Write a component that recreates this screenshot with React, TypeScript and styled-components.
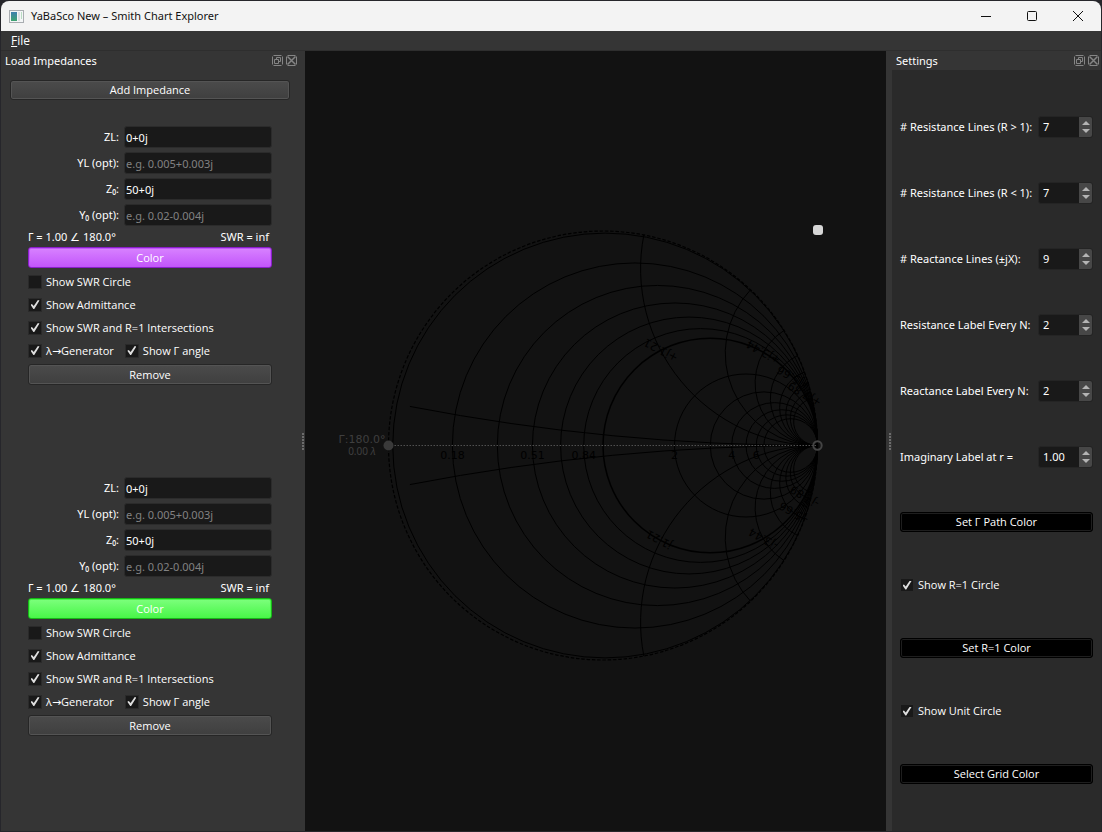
import React, { useState } from 'react';
import styled, { createGlobalStyle } from 'styled-components';

const GlobalStyle = createGlobalStyle`
  * { box-sizing: border-box; }
  body {
    margin: 0;
    background: #26262b;
    font-family: 'Noto Sans', 'Open Sans', sans-serif;
    font-size: 11px;
    line-height: 16px;
    color: #ffffff;
  }
  button, input { font: inherit; color: inherit; }
`;

const controlFont = "'Open Sans', 'DejaVu Sans', sans-serif";

const Window = styled.div`
  display: flex;
  flex-direction: column;
  min-height: 100vh;
  padding: 1px;
`;

const TitleBar = styled.header`
  display: flex;
  align-items: center;
  height: 30px;
  padding-left: 8px;
  gap: 7px;
  background: #f3f3f3;
  color: #111111;
  border-radius: 8px 8px 0 0;
`;

const WindowTitle = styled.h1`
  flex: 1;
  margin: 0;
  font-size: 11px;
  font-weight: 400;
`;

const CaptionButton = styled.button`
  display: flex;
  align-items: center;
  justify-content: center;
  width: 46px;
  height: 30px;
  padding: 0;
  border: 0;
  background: none;
`;

const CaptionGroup = styled.div`
  display: flex;
`;

const MenuBar = styled.nav`
  display: flex;
  align-items: center;
  height: 20px;
  padding-left: 4px;
  background: #353535;
  border-bottom: 1px solid #2e2e2e;
`;

const MenuItem = styled.button`
  padding: 0 6px;
  border: 0;
  background: none;
  font-family: ${controlFont};
  font-size: 12px;
`;

const Workspace = styled.main`
  display: flex;
  flex: 1;
  background: #353535;
`;

const Dock = styled.section<{ $width: number }>`
  display: flex;
  flex-direction: column;
  flex: none;
  width: ${(p) => p.$width}px;
`;

const DockHeader = styled.div`
  display: flex;
  align-items: center;
  height: 19px;
  padding: 0 2px 0 4px;
  gap: 3px;
`;

const DockTitle = styled.h2`
  flex: 1;
  margin: 0;
  font-size: 11px;
  font-weight: 400;
`;

const DockButton = styled.button`
  display: flex;
  padding: 0;
  border: 0;
  background: none;
`;

const LoadBody = styled.div`
  display: flex;
  flex-direction: column;
  padding: 10px 9px 0;
`;

const Groups = styled.div`
  display: flex;
  flex-direction: column;
  gap: 92px;
  padding: 26px 18px 0;
`;

const Group = styled.form`
  display: flex;
  flex-direction: column;
`;

const PushButton = styled.button`
  height: 20px;
  padding: 0;
  font-family: ${controlFont};
  line-height: 16px;
  border: 1px solid #262626;
  border-radius: 3px;
  background: linear-gradient(#4b4b4b, #3f3f3f);
  box-shadow: inset 0 0 0 1px #545454;
`;

const GroupColorButton = styled(PushButton)<{ $top: string; $bottom: string; $edge: string }>`
  height: 21px;
  border-color: ${(p) => p.$edge};
  background: linear-gradient(${(p) => p.$top}, ${(p) => p.$bottom});
  box-shadow: inset 0 0 0 1px ${(p) => p.$bottom};
  margin-bottom: 2px;
`;

const BlackButton = styled(PushButton)`
  border-color: #000000;
  background: #000000;
  box-shadow: inset 0 0 0 1px #1e1e1e;
`;

const FieldRow = styled.label`
  display: flex;
  align-items: center;
  justify-content: flex-end;
  gap: 5px;
  height: 22px;
  margin-bottom: 4px;
`;

const TextBox = styled.input`
  width: 148px;
  height: 22px;
  padding: 0 1px;
  border: 1px solid #2b2b2b;
  border-radius: 3px;
  background: #191919;
  &::placeholder { color: #828282; opacity: 1; }
`;

const Readout = styled.div`
  display: flex;
  justify-content: space-between;
  height: 18px;
  margin-top: -1px;
  padding-right: 3px;
`;

const CheckLine = styled.div`
  display: flex;
  gap: 11px;
  height: 23px;
  align-items: center;
`;

const CheckLabel = styled.label`
  display: flex;
  align-items: center;
  gap: 4px;
  height: 18px;
  font-family: ${controlFont};
`;

const CheckBox = styled.input`
  appearance: none;
  display: grid;
  place-content: center;
  width: 14px;
  height: 14px;
  margin: 0;
  border: 1px solid #2a2a2a;
  background: #191919;
  &:checked::after {
    content: '';
    width: 9px;
    height: 9px;
    background: #dedede;
    clip-path: polygon(0 52%, 16% 44%, 36% 68%, 82% 0, 100% 6%, 42% 100%, 32% 100%);
  }
`;

const RemoveButton = styled(PushButton)`
  height: 21px;
  margin-top: 2px;
`;

const Splitter = styled.div<{ $width: number }>`
  display: flex;
  flex-direction: column;
  align-items: flex-end;
  justify-content: center;
  gap: 1px;
  flex: none;
  width: ${(p) => p.$width}px;
  padding-right: 1px;
`;

const Grip = styled.span`
  width: 2px;
  height: 2px;
  background: #6c6c6c;
`;

const ChartArea = styled.div`
  display: flex;
  flex: 1;
  min-width: 0;
  background: #121212;
`;

const ChartSvg = styled.svg`
  flex: 1;
  min-width: 0;
  width: 100%;
  font-family: 'DejaVu Sans', sans-serif;
`;

const SettingsBody = styled.div`
  display: flex;
  flex-direction: column;
  flex: 1;
  gap: 44px;
  padding: 46px 8px 0;
  background: #2a2a2a;
`;

const SettingRow = styled.label`
  display: flex;
  align-items: center;
  justify-content: space-between;
  height: 22px;
`;

const SpinBox = styled.span`
  display: flex;
  width: 55px;
  height: 22px;
  border: 1px solid #242424;
  border-radius: 3px;
  background: #191919;
  overflow: hidden;
`;

const SpinInput = styled.input`
  flex: 1;
  min-width: 0;
  padding: 0 4px;
  border: 0;
  background: none;
`;

const SpinButtons = styled.span`
  display: flex;
  flex-direction: column;
  width: 13px;
  padding: 2px 0;
  background: #474747;
`;

const SpinButton = styled.button`
  display: flex;
  flex: 1;
  align-items: center;
  justify-content: center;
  padding: 0;
  border: 0;
  background: none;
`;

/* ---------- icons ---------- */

const AppIcon = () => (
  <svg width="15" height="13" viewBox="0 0 15 13">
    <defs>
      <linearGradient id="pane" x1="0" y1="0" x2="0" y2="1">
        <stop offset="0" stopColor="#3f7fae" />
        <stop offset="1" stopColor="#3fa470" />
      </linearGradient>
    </defs>
    <rect x="0.5" y="0.5" width="14" height="12" fill="#f4f6f7" stroke="#a9adb1" />
    <rect x="2" y="2" width="6" height="9" fill="url(#pane)" />
    <rect x="9" y="2" width="2" height="9" fill="#dcdfe2" />
    <rect x="12" y="2" width="1" height="7" fill="#b9dcc2" />
  </svg>
);

const FloatIcon = () => (
  <svg width="11" height="11" viewBox="0 0 11 11" fill="none" stroke="#858585">
    <path d="M1.5 .5h8M1.5 10.5h8M.5 1.5v8M10.5 1.5v8" />
    <path d="M4.5 4.5v-2h4v4h-2M2.5 4.5h4v4h-4z" />
  </svg>
);

const CloseIcon = () => (
  <svg width="11" height="11" viewBox="0 0 11 11" fill="none" stroke="#858585">
    <path d="M1.5 .5h8M1.5 10.5h8M.5 1.5v8M10.5 1.5v8" />
    <path d="M1.5 1.5l8 8M9.5 1.5l-8 8" strokeWidth="1.5" />
  </svg>
);

const DockTitleBar = ({ title }: { title: string }) => (
  <DockHeader>
    <DockTitle>{title}</DockTitle>
    <DockButton type="button" aria-label={`Float ${title}`}><FloatIcon /></DockButton>
    <DockButton type="button" aria-label={`Close ${title}`}><CloseIcon /></DockButton>
  </DockHeader>
);

const Handle = ({ width }: { width: number }) => (
  <Splitter $width={width}>
    {[0, 1, 2, 3, 4, 5].map((i) => <Grip key={i} />)}
  </Splitter>
);

/* ---------- Smith chart ---------- */

const CX = 298;
const CY = 394.5;
const R = 214.5;

const resistances = [0.01, 0.175, 0.34, 0.505, 0.67, 0.835, 2, 3, 4, 5, 6, 7];
const reactances = [0.1, 1.2125, 2.325, 3.4375, 4.55, 5.6625, 6.775, 7.8875, 9];
const realLabels: [number, string][] = [
  [0.175, '0.18'], [0.505, '0.51'], [0.835, '0.84'], [2, '2'], [4, '4'], [6, '6'],
];
const imagLabels: [number, string, number][] = [
  [1.2125, '1.21', 208], [3.4375, '3.44', 209], [5.6625, '5.66', 210], [7.8875, '7.89', 211],
];

const gamma = (r: number, x: number): [number, number] => {
  const d = (r + 1) ** 2 + x * x;
  return [CX + (R * (r * r - 1 + x * x)) / d, CY - (R * 2 * x) / d];
};

const ResistanceCircle = ({ r, width = 1 }: { r: number; width?: number }) => (
  <circle cx={CX + (R * r) / (1 + r)} cy={CY} r={R / (1 + r)} strokeWidth={width} />
);

const ReactanceArc = ({ x }: { x: number }) => {
  const [sx, sy] = gamma(Math.abs(x) < 0.5 ? 0.043 : 0, x);
  const radius = R / Math.abs(x);
  return <path d={`M${sx} ${sy}A${radius} ${radius} 0 0 ${x > 0 ? 0 : 1} ${CX + R} ${CY}`} />;
};

const SmithChart = () => (
  <ChartSvg viewBox="0 0 581 780" role="img" aria-label="Smith chart">
    <g fill="none" stroke="#000000">
      <circle cx={CX} cy={CY} r={R} strokeWidth="1.2" strokeDasharray="3.5 1.8" />
      {resistances.map((r) => <ResistanceCircle key={r} r={r} />)}
      <ResistanceCircle r={1} width={1.5} />
      {reactances.map((x) => <ReactanceArc key={x} x={x} />)}
      {reactances.map((x) => <ReactanceArc key={-x} x={-x} />)}
    </g>
    <g fill="#000000" fontSize="11" textAnchor="middle">
      {realLabels.map(([r, text]) => (
        <text key={text} x={gamma(r, 0)[0]} y={CY + 13}>{text}</text>
      ))}
      {imagLabels.flatMap(([x, text, angle]) =>
        [1, -1].map((sign) => {
          const [px, py] = gamma(1, sign * x);
          return (
            <text key={`${sign}${text}`} y="4" transform={`translate(${px} ${py}) rotate(${angle})`}>
              {sign > 0 ? '+' : '-'}j{text}
            </text>
          );
        }),
      )}
    </g>
    <path d={`M${CX - R} ${CY}H${CX + R}`} stroke="#505050" strokeDasharray="1.5 1.5" />
    <circle cx={CX - R} cy={CY} r="5" fill="#3a3a3a" />
    <circle cx={CX + R} cy={CY} r="4.2" fill="none" stroke="#444444" strokeWidth="2" />
    <g fill="#3f3f3f" textAnchor="middle">
      <text x="57" y="392" fontSize="11">Γ:180.0°</text>
      <text x="57" y="404" fontSize="10" fontFamily="Noto Sans, sans-serif">
        0.00 <tspan fontStyle="italic">λ</tspan>
      </text>
    </g>
    <rect x="508" y="174" width="10" height="10" rx="3" fill="#d6d6d6" />
  </ChartSvg>
);

/* ---------- panels ---------- */

interface Palette { top: string; bottom: string; edge: string }

const Check = ({ label, on = true }: { label: string; on?: boolean }) => {
  const [checked, setChecked] = useState(on);
  return (
    <CheckLabel>
      <CheckBox type="checkbox" checked={checked} onChange={() => setChecked(!checked)} />
      {label}
    </CheckLabel>
  );
};

const LoadGroup = ({ palette }: { palette: Palette }) => (
  <Group>
    <FieldRow>ZL:<TextBox defaultValue="0+0j" /></FieldRow>
    <FieldRow>YL (opt):<TextBox placeholder="e.g. 0.005+0.003j" /></FieldRow>
    <FieldRow>Z₀:<TextBox defaultValue="50+0j" /></FieldRow>
    <FieldRow>Y₀ (opt):<TextBox placeholder="e.g. 0.02-0.004j" /></FieldRow>
    <Readout><span>Γ = 1.00 ∠ 180.0°</span><span>SWR = inf</span></Readout>
    <GroupColorButton type="button" $top={palette.top} $bottom={palette.bottom} $edge={palette.edge}>
      Color
    </GroupColorButton>
    <CheckLine><Check label="Show SWR Circle" on={false} /></CheckLine>
    <CheckLine><Check label="Show Admittance" /></CheckLine>
    <CheckLine><Check label="Show SWR and R=1 Intersections" /></CheckLine>
    <CheckLine><Check label="λ→Generator" /><Check label="Show Γ angle" /></CheckLine>
    <RemoveButton type="button">Remove</RemoveButton>
  </Group>
);

const Spin = ({ label, initial, decimals = 0 }: { label: string; initial: number; decimals?: number }) => {
  const [value, setValue] = useState(initial.toFixed(decimals));
  const step = (d: number) => setValue((Number(value) + d).toFixed(decimals));
  return (
    <SettingRow>
      {label}
      <SpinBox>
        <SpinInput inputMode="decimal" value={value} onChange={(e) => setValue(e.target.value)} />
        <SpinButtons>
          <SpinButton type="button" aria-label="Increase" onClick={() => step(1)}>
            <svg width="8" height="4" viewBox="0 0 8 4"><path d="M0 4L4 0 8 4z" fill="#b4b4b4" /></svg>
          </SpinButton>
          <SpinButton type="button" aria-label="Decrease" onClick={() => step(-1)}>
            <svg width="8" height="4" viewBox="0 0 8 4"><path d="M0 0h8L4 4z" fill="#b4b4b4" /></svg>
          </SpinButton>
        </SpinButtons>
      </SpinBox>
    </SettingRow>
  );
};

export default function App() {
  return (
    <Window>
      <GlobalStyle />
      <TitleBar>
        <AppIcon />
        <WindowTitle>YaBaSco New – Smith Chart Explorer</WindowTitle>
        <CaptionGroup>
          <CaptionButton aria-label="Minimize">
            <svg width="10" height="10" stroke="#111111"><path d="M0 5.5h10" /></svg>
          </CaptionButton>
          <CaptionButton aria-label="Maximize">
            <svg width="10" height="10" fill="none" stroke="#111111"><rect x=".5" y=".5" width="9" height="9" rx="1" /></svg>
          </CaptionButton>
          <CaptionButton aria-label="Close">
            <svg width="10" height="10" stroke="#111111"><path d="M0 0l10 10M10 0L0 10" /></svg>
          </CaptionButton>
        </CaptionGroup>
      </TitleBar>
      <MenuBar>
        <MenuItem type="button"><u>F</u>ile</MenuItem>
      </MenuBar>
      <Workspace>
        <Dock $width={298}>
          <DockTitleBar title="Load Impedances" />
          <LoadBody>
            <PushButton type="button">Add Impedance</PushButton>
            <Groups>
              <LoadGroup palette={{ top: '#d882ff', bottom: '#c255fb', edge: '#8a1fc9' }} />
              <LoadGroup palette={{ top: '#7dff7d', bottom: '#48f748', edge: '#17b817' }} />
            </Groups>
          </LoadBody>
        </Dock>
        <Handle width={6} />
        <ChartArea><SmithChart /></ChartArea>
        <Handle width={6} />
        <Dock $width={209}>
          <DockTitleBar title="Settings" />
          <SettingsBody>
            <Spin label="# Resistance Lines (R > 1):" initial={7} />
            <Spin label="# Resistance Lines (R < 1):" initial={7} />
            <Spin label="# Reactance Lines (±jX):" initial={9} />
            <Spin label="Resistance Label Every N:" initial={2} />
            <Spin label="Reactance Label Every N:" initial={2} />
            <Spin label="Imaginary Label at r =" initial={1} decimals={2} />
            <BlackButton type="button">Set Γ Path Color</BlackButton>
            <Check label="Show R=1 Circle" />
            <BlackButton type="button">Set R=1 Color</BlackButton>
            <Check label="Show Unit Circle" />
            <BlackButton type="button">Select Grid Color</BlackButton>
          </SettingsBody>
        </Dock>
      </Workspace>
    </Window>
  );
}
